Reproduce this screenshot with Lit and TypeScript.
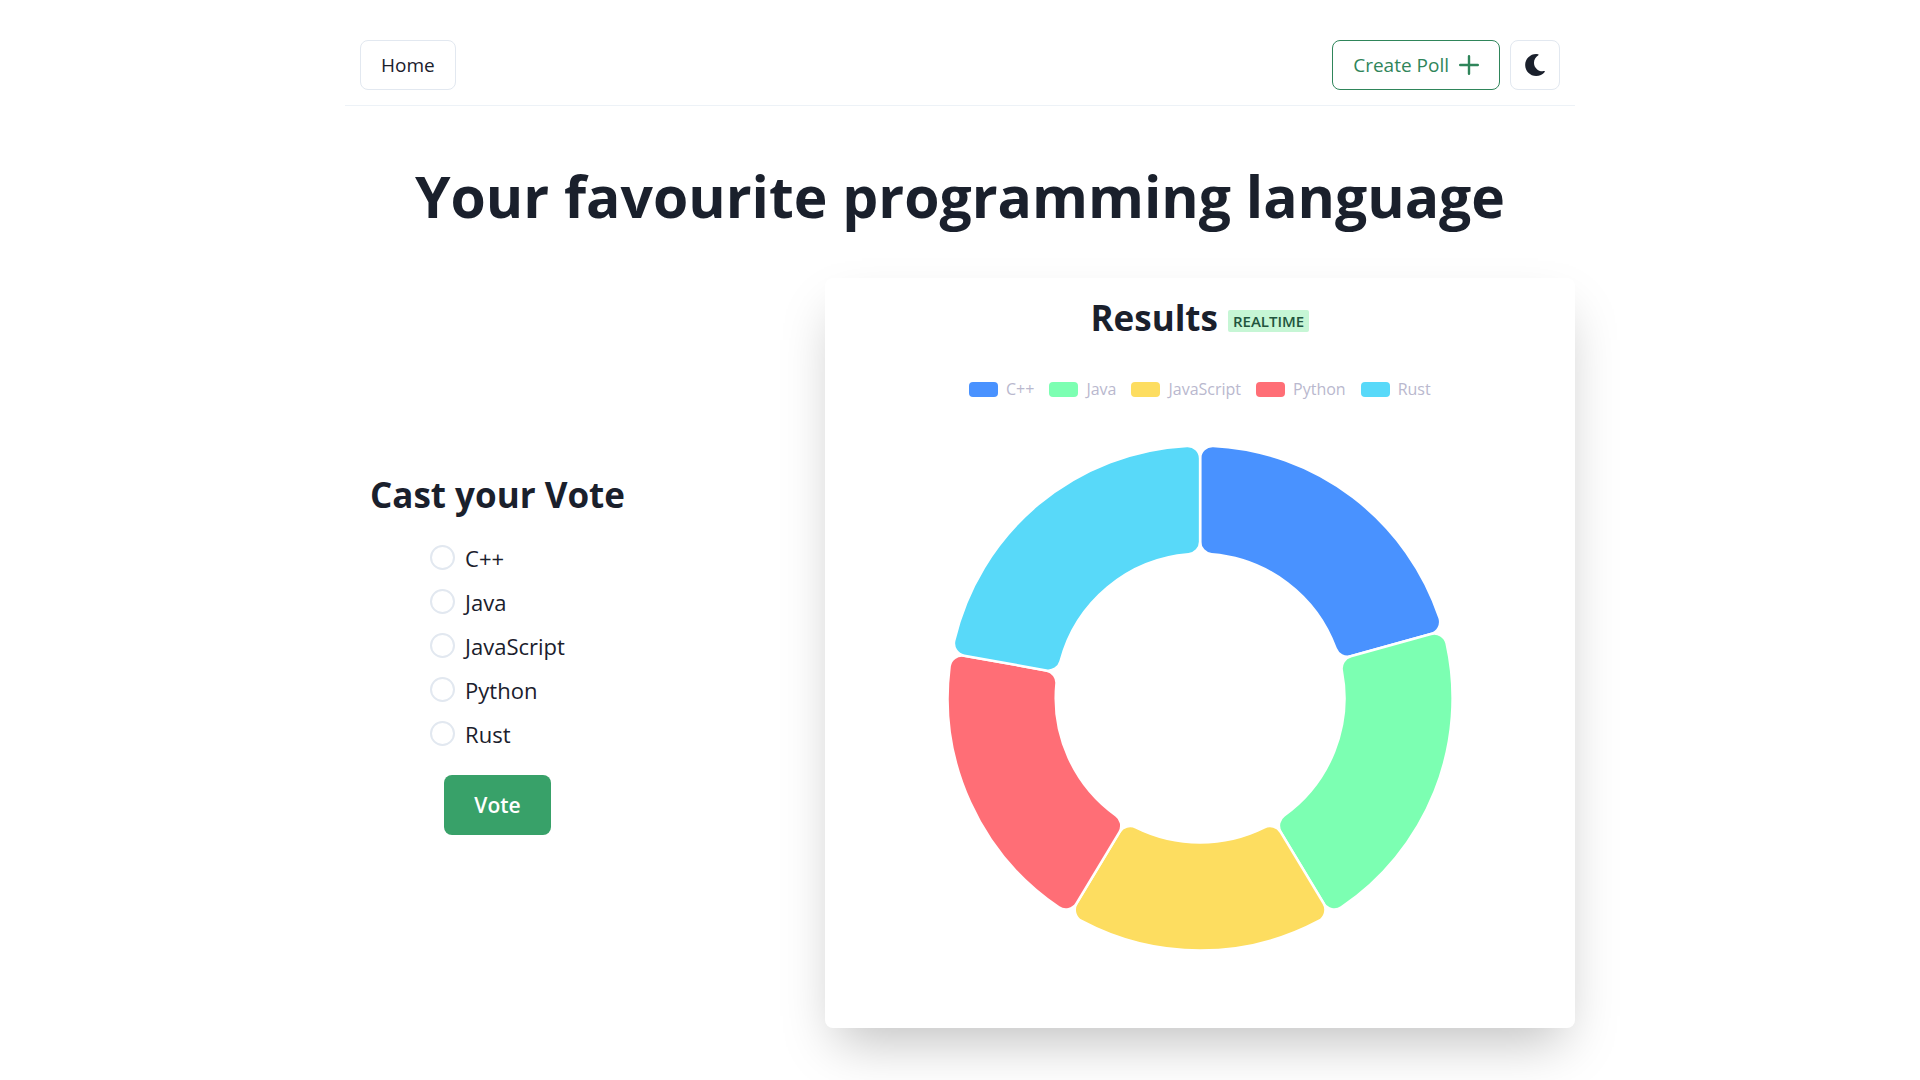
import { LitElement, html, css, svg } from "lit";
import { customElement, state } from "lit/decorators.js";

interface Option {
  name: string;
  votes: number;
  color: string;
}

const OPTIONS: Option[] = [
  { name: "C++", votes: 42, color: "#4992ff" },
  { name: "Java", votes: 42, color: "#7cffb2" },
  { name: "JavaScript", votes: 35, color: "#fddd60" },
  { name: "Python", votes: 39, color: "#ff6e76" },
  { name: "Rust", votes: 45, color: "#58d9f9" },
];

/** Point at radius r, with the angle in radians clockwise from twelve o'clock. */
const polar = (r: number, a: number) =>
  `${(r * Math.sin(a)).toFixed(2)} ${(-r * Math.cos(a)).toFixed(2)}`;

/** Ring sector between two angles, its four corners rounded by c. */
function sector(inner: number, outer: number, from: number, to: number, c: number) {
  const outerTurn = Math.asin(c / (outer - c));
  const innerTurn = Math.asin(c / (inner + c));
  const outerEdge = (outer - c) * Math.cos(outerTurn);
  const innerEdge = (inner + c) * Math.cos(innerTurn);
  return [
    `M ${polar(innerEdge, from)}`,
    `L ${polar(outerEdge, from)}`,
    `A ${c} ${c} 0 0 1 ${polar(outer, from + outerTurn)}`,
    `A ${outer} ${outer} 0 0 1 ${polar(outer, to - outerTurn)}`,
    `A ${c} ${c} 0 0 1 ${polar(outerEdge, to)}`,
    `L ${polar(innerEdge, to)}`,
    `A ${c} ${c} 0 0 1 ${polar(inner, to - innerTurn)}`,
    `A ${inner} ${inner} 0 0 0 ${polar(inner, from + innerTurn)}`,
    `A ${c} ${c} 0 0 1 ${polar(innerEdge, from)}`,
    "Z",
  ].join(" ");
}

@customElement("poll-chart")
export class PollChart extends LitElement {
  static styles = css`
    :host {
      display: block;
    }
    .legend {
      display: flex;
      flex-wrap: wrap;
      justify-content: center;
      gap: 15px;
      margin: 0;
      padding: 0;
      list-style: none;
      font-size: 16px;
      line-height: 20px;
      color: #b9b8ce;
    }
    .item {
      display: flex;
      align-items: center;
      gap: 8px;
    }
    .swatch {
      width: 29px;
      height: 15px;
      border-radius: 4px;
    }
    .ring {
      display: block;
      width: 68%;
      margin: 44px auto 0;
    }
    .slice {
      stroke: #fff;
      stroke-width: 2.5;
    }
  `;

  render() {
    const total = OPTIONS.reduce((sum, o) => sum + o.votes, 0);
    let angle = 0;
    const slices = OPTIONS.map((o) => {
      const from = angle;
      angle += (o.votes / total) * Math.PI * 2;
      return svg`<path class="slice" fill=${o.color} d=${sector(144.3, 252.4, from, angle, 12.5)}></path>`;
    });
    return html`
      <ul class="legend">
        ${OPTIONS.map(
          (o) => html`<li class="item">
            <svg class="swatch" aria-hidden="true"><rect width="29" height="15" fill=${o.color}></rect></svg>${o.name}
          </li>`
        )}
      </ul>
      <svg class="ring" viewBox="-255 -255 510 510" role="img" aria-label="Results">${slices}</svg>
    `;
  }
}

@customElement("app-root")
export class AppRoot extends LitElement {
  static styles = css`
    :host {
      display: block;
      box-sizing: border-box;
      min-height: 100vh;
      overflow: hidden;
      padding: 25px 0 50px;
      background: #fff;
      color: #1a202c;
      font-family: "Segoe UI", "Open Sans", "Noto Sans", sans-serif;
      font-size: 20px;
      line-height: 30px;
    }
    * {
      box-sizing: border-box;
    }
    .container {
      max-width: 1230px;
      margin: 0 auto;
    }
    .nav {
      display: flex;
      align-items: center;
      gap: 10px;
      padding: 15px;
      border-bottom: 1px solid #edf2f7;
    }
    .spacer {
      flex: 1;
    }
    .btn {
      display: inline-flex;
      align-items: center;
      justify-content: center;
      gap: 10px;
      height: 50px;
      padding: 0 20px;
      border: 1px solid #e2e8f0;
      border-radius: 8px;
      background: none;
      color: inherit;
      font: inherit;
      font-size: 19px;
      font-weight: 500;
      line-height: 30px;
      text-decoration: none;
      cursor: pointer;
    }
    .create {
      border-color: #2f855a;
      color: #2f855a;
    }
    .square {
      width: 50px;
      padding: 0;
    }
    .icon {
      display: block;
      width: 20px;
      height: 20px;
    }
    .square .icon {
      width: 22px;
      height: 22px;
    }
    .title {
      margin: 60px 0 52px;
      font-size: 57px;
      font-weight: 700;
      line-height: 60px;
      text-align: center;
    }
    .poll {
      display: flex;
      align-items: center;
      justify-content: space-between;
    }
    .form {
      display: flex;
      flex-direction: column;
      align-items: center;
      padding: 26px 25px;
    }
    .subtitle {
      margin: 0;
      font-size: 35px;
      font-weight: 700;
      line-height: 45px;
    }
    .choices {
      display: flex;
      flex-direction: column;
      gap: 10px;
      margin: 24px 0;
      padding: 0;
      border: 0;
    }
    .choice {
      display: flex;
      align-items: center;
      gap: 10px;
      font-size: 22px;
      line-height: 34px;
      cursor: pointer;
    }
    .radio {
      appearance: none;
      width: 25px;
      height: 25px;
      margin: 0;
      border: 2px solid #e2e8f0;
      border-radius: 50%;
    }
    .radio:checked {
      border: 7px solid #38a169;
    }
    .vote {
      height: 60px;
      padding: 0 30px;
      border: 0;
      background: #38a169;
      color: #fff;
      font-size: 21px;
      font-weight: 600;
    }
    .card {
      width: 61%;
      aspect-ratio: 1;
      padding: 17px 0;
      border-radius: 8px;
      background: #fff;
      box-shadow: 0 25px 50px -12px rgba(0, 0, 0, 0.25);
    }
    .results {
      display: flex;
      align-items: center;
      justify-content: center;
      gap: 10px;
      margin-bottom: 39px;
    }
    .badge {
      margin-top: 6px;
      padding: 0 5px;
      border-radius: 2px;
      background: #c6f6d5;
      color: #22543d;
      font-size: 15px;
      font-weight: 600;
      line-height: 22px;
      text-transform: uppercase;
    }
  `;

  @state() private selected = "";

  render() {
    return html`
      <div class="container">
        <nav class="nav">
          <a class="btn" href="#home">Home</a>
          <span class="spacer"></span>
          <a class="btn create" href="#create">
            Create Poll
            <svg class="icon" viewBox="0 0 20 20" aria-hidden="true">
              <path d="M10 1.2v17.6M1.2 10h17.6" fill="none" stroke="currentColor" stroke-width="2.4" stroke-linecap="round"></path>
            </svg>
          </a>
          <button class="btn square" type="button" aria-label="Toggle dark mode">
            <svg class="icon" viewBox="0 0 512 512" aria-hidden="true">
              <path
                fill="currentColor"
                d="M283.211 512c78.962 0 151.079-35.925 198.857-94.792 7.068-8.708-.639-21.43-11.562-19.35-124.203 23.654-238.262-71.576-238.262-196.954 0-72.222 38.662-138.635 101.498-174.394 9.686-5.512 7.25-20.197-3.756-22.23A258.156 258.156 0 0 0 283.211 0c-141.309 0-256 114.511-256 256 0 141.309 114.511 256 256 256z"
              ></path>
            </svg>
          </button>
        </nav>
        <main>
          <h1 class="title">Your favourite programming language</h1>
          <div class="poll">
            <form class="form" @submit=${(e: Event) => e.preventDefault()}>
              <h2 class="subtitle" id="cast">Cast your Vote</h2>
              <fieldset class="choices" aria-labelledby="cast">
                ${OPTIONS.map(
                  (o) => html`<label class="choice">
                    <input
                      class="radio"
                      type="radio"
                      name="language"
                      .value=${o.name}
                      .checked=${this.selected === o.name}
                      @change=${() => (this.selected = o.name)}
                    />${o.name}
                  </label>`
                )}
              </fieldset>
              <button class="btn vote" type="submit">Vote</button>
            </form>
            <section class="card">
              <div class="results">
                <h2 class="subtitle">Results</h2>
                <span class="badge">Realtime</span>
              </div>
              <poll-chart></poll-chart>
            </section>
          </div>
        </main>
      </div>
    `;
  }
}
